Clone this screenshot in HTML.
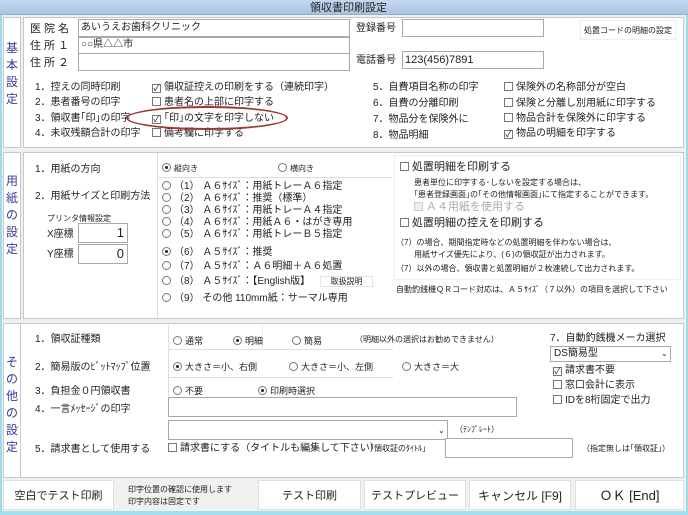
<!DOCTYPE html>
<html><head><meta charset="utf-8"><style>
*{margin:0;padding:0;box-sizing:border-box}
body{width:688px;height:515px;overflow:hidden;background:#f0f0f0;font-family:"Liberation Sans","Noto Sans CJK JP",sans-serif;font-size:10px;color:#222;position:relative}
div,span{position:absolute;white-space:nowrap}
.box{background:#fff;border:1px solid #c8c8c8}
.lab{background:#fff;border:1px solid #c8c8c8;color:#3a3a9a;font-size:12px;line-height:17px;text-align:center;width:18px;white-space:normal}
.in{background:#fff;border:1px solid #a8a8a8}
.t{line-height:12px}
.cb{display:inline-block;position:relative;width:9px;height:9px;border:1px solid #777;background:#fff;vertical-align:-1px;margin-right:3px;font-size:9px;line-height:7px;text-align:center}
.rb{display:inline-block;position:relative;width:9px;height:9px;border:1px solid #777;border-radius:50%;background:#fff;vertical-align:-1px;margin-right:3px}
.rb.on::after{content:"";position:absolute;left:2px;top:2px;width:3px;height:3px;border-radius:50%;background:#222}
.btn{background:#fff;border:1px solid #e0e0e0;text-align:center;font-size:11px;line-height:30px}
.s{font-size:8px}
</style></head><body>
<div style="left:0;top:0;width:688px;height:15px;background:linear-gradient(#c4d8ee,#a9c4e2);border-bottom:1px solid #8fb0d6"></div>
<div class="t" style="left:310px;top:2px;font-size:11px">領収書印刷設定</div>
<div style="left:0;top:15px;width:2px;height:500px;background:#9fd9ea"></div>
<div style="left:686px;top:15px;width:2px;height:500px;background:#9fd9ea"></div>
<div style="left:0;top:511px;width:688px;height:4px;background:#9fe0ef"></div>

<!-- section 1 -->
<div class="lab" style="left:3px;top:17px;height:131px;padding-top:22px">基本設定</div>
<div class="box" style="left:23px;top:17px;width:661px;height:131px"></div>
<div class="t" style="left:30px;top:23px;font-size:11px;letter-spacing:3px">医院名</div>
<div class="t" style="left:30px;top:40px;font-size:11px;letter-spacing:3px">住所１</div>
<div class="t" style="left:30px;top:57px;font-size:11px;letter-spacing:3px">住所２</div>
<div class="in" style="left:78px;top:19px;width:272px;height:18px"></div>
<div class="in" style="left:78px;top:37px;width:272px;height:17px"></div>
<div class="in" style="left:78px;top:53px;width:272px;height:18px"></div>
<div class="t" style="left:81px;top:22px;font-size:10px">あいうえお歯科クリニック</div>
<div class="t" style="left:81px;top:39px;font-size:10px">○○県△△市</div>
<div class="t" style="left:356px;top:23px;font-size:10px">登録番号</div>
<div class="in" style="left:402px;top:19px;width:142px;height:18px"></div>
<div class="t" style="left:356px;top:55px;font-size:10px">電話番号</div>
<div class="in" style="left:402px;top:51px;width:142px;height:18px"></div>
<div class="t" style="left:405px;top:54px;font-size:11px">123(456)7891</div>
<div class="box" style="left:580px;top:20px;width:96px;height:20px;border-color:#eee;font-size:8px;line-height:20px;text-align:center">処置コードの明細の設定</div>
<div class="t" style="left:35px;top:82px;font-size:10px">1．控えの同時印刷</div>
<div class="t" style="left:35px;top:97px;font-size:10px">2．患者番号の印字</div>
<div class="t" style="left:35px;top:113px;font-size:10px">3．領収書｢印｣の印字</div>
<div class="t" style="left:35px;top:128px;font-size:10px">4．未収残額合計の印字</div>
<div class="t" style="left:152px;top:82px;font-size:10px"><span class="cb">✓</span>領収証控えの印刷をする（連続印字）</div>
<div class="t" style="left:152px;top:97px;font-size:10px"><span class="cb"></span>患者名の上部に印字する</div>
<div class="t" style="left:152px;top:113px;font-size:10px"><span class="cb">✓</span>｢印｣の文字を印字しない</div>
<div class="t" style="left:152px;top:128px;font-size:10px"><span class="cb"></span>備考欄に印字する</div>
<div style="left:126px;top:106px;width:162px;height:24px;border:2px solid #9b3a30;border-radius:50%"></div>
<div class="t" style="left:373px;top:82px;font-size:10px">5．自費項目名称の印字</div>
<div class="t" style="left:373px;top:98px;font-size:10px">6．自費の分離印刷</div>
<div class="t" style="left:373px;top:114px;font-size:10px">7．物品分を保険外に</div>
<div class="t" style="left:373px;top:130px;font-size:10px">8．物品明細</div>
<div class="t" style="left:504px;top:82px;font-size:10px"><span class="cb"></span>保険外の名称部分が空白</div>
<div class="t" style="left:504px;top:98px;font-size:10px"><span class="cb"></span>保険と分離し別用紙に印字する</div>
<div class="t" style="left:504px;top:113px;font-size:10px"><span class="cb"></span>物品合計を保険外に印字する</div>
<div class="t" style="left:504px;top:128px;font-size:10px"><span class="cb">✓</span>物品の明細を印字する</div>

<!-- section 2 -->
<div class="lab" style="left:3px;top:152px;height:167px;padding-top:20px">用紙の設定</div>
<div class="box" style="left:23px;top:152px;width:661px;height:167px"></div>
<div style="left:157px;top:153px;width:1px;height:165px;background:#ddd"></div>
<div style="left:157px;top:177px;width:235px;height:1px;background:#ddd"></div>
<div class="t" style="left:35px;top:164px;font-size:10px">1．用紙の方向</div>
<div class="t" style="left:35px;top:191px;font-size:10px">2．用紙サイズと印刷方法</div>
<div class="t" style="left:47px;top:213px;font-size:8px">プリンタ情報設定</div>
<div class="t" style="left:47px;top:229px;font-size:10px">X座標</div>
<div class="t" style="left:47px;top:249px;font-size:10px">Y座標</div>
<div class="in" style="left:78px;top:223px;width:50px;height:20px;text-align:right;padding-right:3px;font-size:13px;line-height:18px">1</div>
<div class="in" style="left:78px;top:244px;width:50px;height:20px;text-align:right;padding-right:3px;font-size:13px;line-height:18px">0</div>
<div class="t" style="left:162px;top:163px;font-size:8px"><span class="rb on"></span>縦向き</div>
<div class="t" style="left:278px;top:163px;font-size:8px"><span class="rb"></span>横向き</div>
<div class="t" style="left:162px;top:181px;font-size:10px"><span class="rb"></span>（1） Ａ６ｻｲｽﾞ：用紙トレーＡ６指定</div>
<div class="t" style="left:162px;top:193px;font-size:10px"><span class="rb"></span>（2） Ａ６ｻｲｽﾞ：推奨（標準）</div>
<div class="t" style="left:162px;top:205px;font-size:10px"><span class="rb"></span>（3） Ａ６ｻｲｽﾞ：用紙トレーＡ４指定</div>
<div class="t" style="left:162px;top:217px;font-size:10px"><span class="rb"></span>（4） Ａ６ｻｲｽﾞ：用紙Ａ６・はがき専用</div>
<div class="t" style="left:162px;top:229px;font-size:10px"><span class="rb"></span>（5） Ａ６ｻｲｽﾞ：用紙トレーＢ５指定</div>
<div class="t" style="left:162px;top:247px;font-size:10px"><span class="rb on"></span>（6） Ａ５ｻｲｽﾞ：推奨</div>
<div class="t" style="left:162px;top:261px;font-size:10px"><span class="rb"></span>（7） Ａ５ｻｲｽﾞ：Ａ６明細＋Ａ６処置</div>
<div class="t" style="left:162px;top:276px;font-size:10px"><span class="rb"></span>（8） Ａ５ｻｲｽﾞ：【English版】</div>
<div class="box" style="left:320px;top:276px;width:53px;height:11px;border-color:#e4e4e4;font-size:8px;line-height:9px;text-align:center">取扱説明</div>
<div class="t" style="left:162px;top:293px;font-size:10px"><span class="rb"></span>（9） その他 110mm紙：サーマル専用</div>
<div style="left:394px;top:155px;width:287px;height:125px;background:#fff;border:1px solid #eee"></div>
<div class="t" style="left:400px;top:161px;font-size:11px"><span class="cb"></span>処置明細を印刷する</div>
<div class="t s" style="left:414px;top:177px">患者単位に印字する･しないを設定する場合は、</div>
<div class="t s" style="left:414px;top:189px">｢患者登録画面｣の｢その他情報画面｣にて指定することができます。</div>
<div class="t" style="left:414px;top:201px;font-size:11px;color:#aaa"><span class="cb" style="border-color:#ccc;background:#eee"></span>Ａ４用紙を使用する</div>
<div class="t" style="left:400px;top:217px;font-size:11px"><span class="cb"></span>処置明細の控えを印刷する</div>
<div class="t s" style="left:396px;top:237px">（7）の場合、期間指定時などの処置明細を伴わない場合は、</div>
<div class="t s" style="left:414px;top:249px">用紙サイズ優先により、(６)の領収証が出力されます。</div>
<div class="t s" style="left:396px;top:263px">（7）以外の場合、領収書と処置明細が２枚連続して出力されます。</div>
<div class="t s" style="left:396px;top:284px">自動釣銭機ＱＲコード対応は、Ａ５ｻｲｽﾞ（７以外）の項目を選択して下さい</div>

<!-- section 3 -->
<div class="lab" style="left:3px;top:323px;height:155px;padding-top:30px">その他の設定</div>
<div class="box" style="left:20px;top:323px;width:664px;height:155px"></div>
<div style="left:168px;top:325px;width:1px;height:72px;background:#ddd"></div>
<div style="left:168px;top:349px;width:225px;height:1px;background:#ddd"></div>
<div style="left:168px;top:377px;width:225px;height:1px;background:#ddd"></div>
<div style="left:262px;top:325px;width:1px;height:24px;background:#eee"></div>
<div class="t" style="left:35px;top:334px;font-size:10px">1．領収証種類</div>
<div class="t" style="left:35px;top:362px;font-size:10px">2．簡易版のﾋﾞｯﾄﾏｯﾌﾟ位置</div>
<div class="t" style="left:35px;top:386px;font-size:10px">3．負担金０円領収書</div>
<div class="t" style="left:35px;top:404px;font-size:10px">4．一言ﾒｯｾｰｼﾞの印字</div>
<div class="t" style="left:35px;top:444px;font-size:10px">5．請求書として使用する</div>
<div class="t" style="left:173px;top:335px;font-size:9px"><span class="rb"></span>通常</div>
<div class="t" style="left:233px;top:335px;font-size:9px"><span class="rb on"></span>明細</div>
<div class="t" style="left:292px;top:335px;font-size:9px"><span class="rb"></span>簡易</div>
<div class="t s" style="left:355px;top:334px">（明細以外の選択はお勧めできません）</div>
<div class="t" style="left:173px;top:361px;font-size:9px"><span class="rb on"></span>大きさ＝小、右側</div>
<div class="t" style="left:289px;top:361px;font-size:9px"><span class="rb"></span>大きさ＝小、左側</div>
<div class="t" style="left:402px;top:361px;font-size:9px"><span class="rb"></span>大きさ＝大</div>
<div class="t" style="left:173px;top:385px;font-size:9px"><span class="rb"></span>不要</div>
<div class="t" style="left:258px;top:385px;font-size:9px"><span class="rb on"></span>印刷時選択</div>
<div class="in" style="left:168px;top:397px;width:349px;height:20px"></div>
<div class="in" style="left:168px;top:420px;width:280px;height:20px"></div>
<div class="t" style="left:438px;top:425px;font-size:8px">⌄</div>
<div class="t s" style="left:455px;top:424px">（ﾃﾝﾌﾟﾚｰﾄ）</div>
<div class="t" style="left:168px;top:443px;font-size:10px"><span class="cb"></span>請求書にする（タイトルも編集して下さい）</div>
<div class="t s" style="left:370px;top:443px">｢領収証のﾀｲﾄﾙ｣</div>
<div class="in" style="left:445px;top:438px;width:128px;height:20px"></div>
<div class="t s" style="left:582px;top:443px">（指定無しは｢領収証｣）</div>
<div class="t" style="left:550px;top:333px;font-size:10px">7．自動釣銭機メーカ選択</div>
<div class="in" style="left:550px;top:346px;width:121px;height:16px;font-size:10px;line-height:14px;padding-left:3px">DS簡易型<span style="left:110px;top:0;font-size:8px">⌄</span></div>
<div class="t" style="left:553px;top:365px;font-size:10px"><span class="cb">✓</span>請求書不要</div>
<div class="t" style="left:553px;top:380px;font-size:10px"><span class="cb"></span>窓口会計に表示</div>
<div class="t" style="left:553px;top:395px;font-size:10px"><span class="cb"></span>IDを8桁固定で出力</div>

<!-- buttons -->
<div class="btn" style="left:3px;top:480px;width:111px;height:30px">空白でテスト印刷</div>
<div class="t s" style="left:128px;top:484px;font-size:8px;line-height:12px">印字位置の確認に使用します<br>印字内容は固定です</div>
<div class="btn" style="left:258px;top:480px;width:103px;height:30px">テスト印刷</div>
<div class="btn" style="left:364px;top:480px;width:102px;height:30px">テストプレビュー</div>
<div class="btn" style="left:469px;top:480px;width:102px;height:30px;font-size:12px">キャンセル [F9]</div>
<div class="btn" style="left:575px;top:480px;width:109px;height:30px;font-size:13px">ＯＫ [End]</div>
</body></html>
